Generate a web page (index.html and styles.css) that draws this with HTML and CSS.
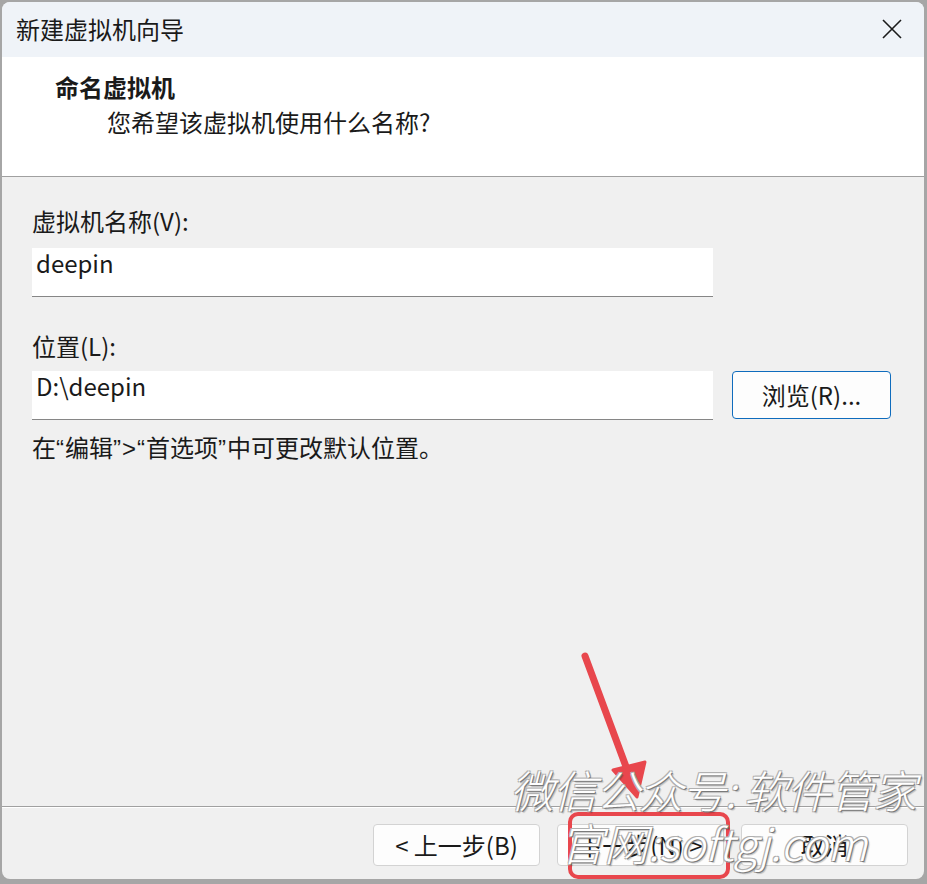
FILE: index.html
```html
<!DOCTYPE html>
<html lang="zh-CN">
<head>
  <meta charset="UTF-8" />
  <title>新建虚拟机向导</title>
  <link rel="stylesheet" href="styles.css">
</head>
<body>

<div class="window">
  <!-- TITLE BAR -->
  <div class="titlebar">
    <span class="title">新建虚拟机向导</span>
    <svg class="close" width="20" height="20" viewBox="0 0 20 20">
      <path d="M1 1 L19 19 M19 1 L1 19" stroke="#1b1b1b" stroke-width="1.6" fill="none"/>
    </svg>
  </div>

  <!-- HEADER -->
  <div class="header">
    <div class="step">命名虚拟机</div>
    <div class="question">您希望该虚拟机使用什么名称?</div>
  </div>

  <!-- FORM -->
  <div class="content">
    <div class="label lbl-name">虚拟机名称(V):</div>
    <div class="field">deepin</div>
    <div class="label lbl-loc">位置(L):</div>
    <div class="row">
      <div class="field">D:\deepin</div>
      <button class="btn browse">浏览(R)...</button>
    </div>
    <div class="label hint">在<span class="q">“</span>编辑<span class="q">”&gt;“</span>首选项<span class="q">”</span>中可更改默认位置。</div>
  </div>

  <!-- FOOTER BUTTONS -->
  <div class="footer">
    <button class="btn">&lt; 上一步(B)</button>
    <button class="btn">下一步(N) &gt;</button>
    <button class="btn">取消</button>
  </div>
</div>

<!-- ANNOTATIONS -->
<svg class="marks" width="927" height="884" viewBox="0 0 927 884">
  <line x1="585" y1="656" x2="628" y2="772" stroke="#e8474d" stroke-width="7" stroke-linecap="round"/>
  <polygon points="637,797 613,770 645,762" fill="#e8474d" stroke="#e8474d" stroke-width="3" stroke-linejoin="round"/>
  <rect x="570" y="814" width="158" height="63" rx="8" fill="none" stroke="#e8474d" stroke-width="4"/>
</svg>
<div class="wm wm1">微信公众号: 软件管家</div>
<div class="wm wm2">官网:softgj.com</div>

</body>
</html>
```

FILE: styles.css
```css
* { box-sizing: border-box; }
html, body {
  margin: 0; padding: 0;
  background: #a6a6a6;
  font-family: "Noto Sans CJK SC", "Noto Sans", sans-serif;
  font-size: 24px;
  color: #1a1a1a;
  overflow: hidden;
}
body { padding: 2px; height: 884px; position: relative; }
.window {
  width: 922px; height: 877px;
  border-radius: 8px; overflow: hidden;
  background: #f0f0f0;
  display: flex; flex-direction: column;
}
.titlebar {
  height: 55px; background: #eff3f8;
  display: flex; align-items: center; justify-content: space-between;
  padding: 0 22px 2px 14px;
}
.title { line-height: 32px; }
.header {
  height: 120px; background: #fff;
  border-bottom: 1px solid #a0a0a0;
  padding: 14px 0 0 53px;
}
.step { font-weight: bold; line-height: 32px; }
.question { line-height: 32px; margin: 3px 0 0 52px; }
.content { flex: 1; padding: 28px 0 0 30px; }
.label { line-height: 32px; }
.lbl-name { margin-bottom: 11px; }
.lbl-loc { margin: 33px 0 9px; }
.hint { margin-top: 11px; }
.hint .q { font-family: "Liberation Sans", sans-serif; font-size: 24px; letter-spacing: 1px; }
.field {
  width: 681px; height: 49px;
  background: #fff; border-bottom: 1px solid #868686;
  padding: 0 4px; line-height: 30px;
}
.row { display: flex; gap: 19px; }
.btn {
  font-family: inherit; font-size: 24px; color: #1a1a1a;
  background: #fdfdfd; border: 1px solid #d3d3d3; border-radius: 4px;
  padding: 0; line-height: 32px;
}
.browse { width: 159px; height: 48px; border-color: #0f6cbd; }
.footer {
  height: 73px;
  border-top: 1px solid #a0a0a0;
  box-shadow: inset 0 1px 0 #fff;
  display: flex; justify-content: flex-end; gap: 17px;
  padding: 17px 16px 0 0;
}
.footer .btn { width: 167px; height: 42px; }
.marks { position: absolute; left: 0; top: 0; pointer-events: none; }
.wm {
  position: absolute;
  font-size: 44px; line-height: 48px; font-style: italic; font-weight: 300;
  color: #fff; white-space: nowrap;
  text-shadow: 1px 1px 0 #7a7a7a, -1px -1px 0 #b0b0b0, 1px -1px 0 #b0b0b0, -1px 1px 0 #b0b0b0, 2px 2px 1px rgba(0, 0, 0, 0.2);
}
.wm1 { left: 510px; top: 765px; letter-spacing: -1px; }
.wm2 { left: 560px; top: 818px; }
```
